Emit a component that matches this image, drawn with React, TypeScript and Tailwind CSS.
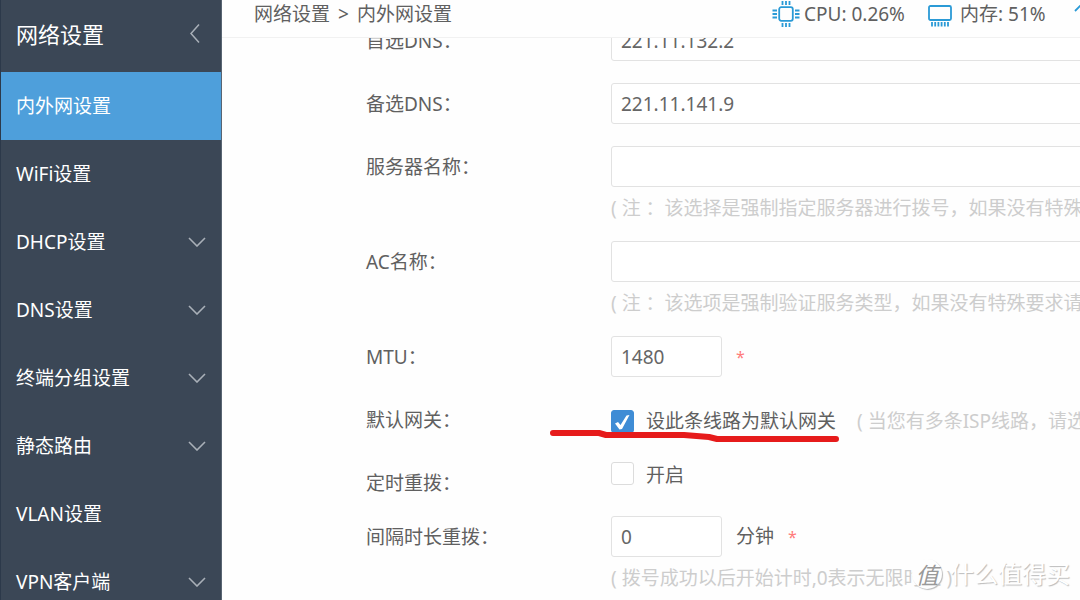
import React, { useState } from "react";
import { clsx } from "clsx";

const menuItems = [
  { name: "内外网设置" },
  { name: "WiFi设置" },
  { name: "DHCP设置", children: true },
  { name: "DNS设置", children: true },
  { name: "终端分组设置", children: true },
  { name: "静态路由", children: true },
  { name: "VLAN设置" },
  { name: "VPN客户端", children: true },
];

const ChevronDown = () => (
  <svg width="18" height="10" viewBox="0 0 18 10" fill="none" stroke="#a9b0b8" strokeWidth="1.6">
    <path d="M1 1l8 8 8-8" />
  </svg>
);

const ChevronLeft = () => (
  <svg width="10" height="19" viewBox="0 0 10 19" fill="none" stroke="#a9b0b8" strokeWidth="1.5">
    <path d="M9 0.5L1 9.5l8 9" />
  </svg>
);

const CpuIcon = () => (
  <svg width="28" height="28" viewBox="0 0 28 28" fill="none" stroke="#2a9ad6" strokeWidth="1.8">
    <rect x="7.2" y="7.2" width="13.6" height="13.6" rx="2" />
    <path d="M10.500 1v4M14 1v4M17.500 1v4M10.500 23v4M14 23v4M17.500 23v4M.5 10.500h4.500M.5 14h4.500M.5 17.500h4.500M23 10.500h4.500M23 14h4.500M23 17.500h4.500" />
  </svg>
);

const MemoryIcon = () => (
  <svg width="24" height="22" viewBox="0 0 24 22" fill="none" stroke="#2a9ad6" strokeWidth="1.8">
    <rect x="1" y="1" width="22" height="14" rx="1.500" />
    <path d="M4 17v4.500M7.200 17v4.500M10.400 17v4.500M13.600 17v4.500M16.800 17v4.500M20 17v4.500" />
  </svg>
);

const UploadIcon = () => (
  <svg width="20" height="24" viewBox="0 0 20 24" fill="none" stroke="#2a9ad6" strokeWidth="1.8">
    <path d="M1 11l9-9 9 9M10 3v20" />
  </svg>
);

const Row = ({ label, id, hint, short, children }: any) => (
  <div className="mb-[22px]">
    <div className={clsx("flex", short ? "h-8 items-start" : "h-[41px] items-center")}>
      <label htmlFor={id} className="w-[245px] shrink-0 leading-[42px]">
        {label}：
      </label>
      {children}
    </div>
    {hint && <p className="ml-[245px] pt-[10px] leading-[22px] text-[#cdcdcd]">{hint}</p>}
  </div>
);

const TextInput = ({ className = "flex-1", ...props }: any) => (
  <input
    type="text"
    className={clsx(
      "h-[41px] rounded-[3px] border border-[#e2e2e2] bg-white px-[9px] text-[#666] outline-none",
      className
    )}
    {...props}
  />
);

const CheckBox = ({ id, checked, onChange }: any) => (
  <span className="relative flex size-[23px] shrink-0">
    <input
      id={id}
      type="checkbox"
      checked={checked}
      onChange={onChange}
      className="size-[23px] appearance-none rounded-[3px] border border-[#dcdcdc] bg-white checked:border-[#3f8cd5] checked:bg-[#3f8cd5]"
    />
    {checked && (
      <svg className="pointer-events-none absolute inset-0" viewBox="0 0 23 23" fill="white">
        <path d="M4 13.500l3-1.500 2.500 3L15.500 5.500l3-.500L11 19l-2.500.500z" />
      </svg>
    )}
  </span>
);

const Required = () => <span className="ml-[14px] text-base text-[#ff7b7b]">*</span>;

const Sidebar = () => {
  const [active, setActive] = useState("内外网设置");

  return (
    <aside className="w-[222px] shrink-0 border-x border-l-[#2c394a] border-r-[#596573] bg-[#3b4756] text-white">
      <div className="flex h-[72px] items-start justify-between pr-[21px] pl-[15px]">
        <h1 className="text-[22px] leading-[68px]">网络设置</h1>
        <button type="button" aria-label="收起" className="mt-6">
          <ChevronLeft />
        </button>
      </div>
      <nav>
        {menuItems.map((item) => (
          <button
            key={item.name}
            type="button"
            onClick={() => setActive(item.name)}
            className={clsx(
              "flex h-[68px] w-full items-center justify-between pr-[15px] pl-[15px]",
              active === item.name && "bg-[#4e9fdb]"
            )}
          >
            {item.name}
            {item.children && <ChevronDown />}
          </button>
        ))}
      </nav>
    </aside>
  );
};

const TopBar = () => (
  <header className="z-10 flex h-[38px] shrink-0 items-start border-b border-[#f1f1f1] bg-[#fefefe] pl-8 leading-7 whitespace-nowrap">
    <div className="flex gap-2">
      <span>网络设置</span>
      <span>&gt;</span>
      <span>内外网设置</span>
    </div>
    <div className="-mr-[14px] ml-auto flex shrink-0">
      <div className="mr-5 flex gap-1">
        <CpuIcon />
        <span className="w-[104px]">CPU: 0.26%</span>
      </div>
      <div className="mr-[27px] flex gap-2">
        <span className="pt-[5px]">
          <MemoryIcon />
        </span>
        <span className="w-[87px]">内存: 51%</span>
      </div>
      <UploadIcon />
    </div>
  </header>
);

export default function App() {
  const [gateway, setGateway] = useState(true);
  const [redial, setRedial] = useState(false);

  return (
    <div className="relative flex h-screen overflow-hidden bg-[#fefefe] font-['Noto_Sans','Noto_Sans_CJK_SC',sans-serif] text-[19px] text-[#606060]">
      <Sidebar />
      <main className="flex min-w-0 flex-1 flex-col overflow-hidden">
        <TopBar />
        <div className="min-h-0 flex-1 overflow-hidden">
          {/* scrolled a little, the first row sits under the top bar */}
          <form className="-mt-[18px] ml-36 min-w-[840px] whitespace-nowrap">
            <Row label="首选DNS" id="dns1">
              <TextInput id="dns1" defaultValue="221.11.132.2" />
            </Row>
            <Row label="备选DNS" id="dns2">
              <TextInput id="dns2" defaultValue="221.11.141.9" />
            </Row>
            <Row
              label="服务器名称"
              id="server"
              hint="( 注 ：该选择是强制指定服务器进行拨号，如果没有特殊"
            >
              <TextInput id="server" />
            </Row>
            <Row
              label="AC名称"
              id="ac"
              hint="( 注 ：该选项是强制验证服务类型，如果没有特殊要求请"
            >
              <TextInput id="ac" />
            </Row>
            <Row label="MTU" id="mtu">
              <TextInput id="mtu" defaultValue="1480" className="w-[111px]" />
              <Required />
            </Row>
            <Row label="默认网关" id="gateway">
              <div className="relative flex items-center pt-1">
                <CheckBox id="gateway" checked={gateway} onChange={() => setGateway(!gateway)} />
                <label htmlFor="gateway" className="ml-3">
                  设此条线路为默认网关
                </label>
                {/* hand drawn underline */}
                <svg
                  className="pointer-events-none absolute top-[26px] -left-[62px]"
                  width="292"
                  height="16"
                  viewBox="0 0 292 16"
                  fill="none"
                  stroke="#e61b1b"
                  strokeWidth="6"
                  strokeLinecap="round"
                  strokeLinejoin="round"
                >
                  <path d="M4 4H50L57 6H135L160 8L168 10H287" />
                </svg>
              </div>
              <span className="ml-[21px] pt-1 text-[#cdcdcd]">( 当您有多条ISP线路，请选</span>
            </Row>
            <Row label="定时重拨" id="redial" short>
              <CheckBox id="redial" checked={redial} onChange={() => setRedial(!redial)} />
              <label htmlFor="redial" className="ml-3 leading-[26px]">
                开启
              </label>
            </Row>
            <Row
              label="间隔时长重拨"
              id="interval"
              hint="( 拨号成功以后开始计时,0表示无限时长 )"
            >
              <TextInput id="interval" defaultValue="0" className="w-[111px]" />
              <span className="ml-[14px]">分钟</span>
              <Required />
            </Row>
          </form>
        </div>
      </main>

      {/* Watermark */}
      <div className="pointer-events-none absolute right-[10px] bottom-1 flex items-center gap-2 text-[24px] leading-[44px] text-white [text-shadow:1px_1px_1px_#bbb]">
        <span className="flex size-[30px] items-center justify-center rounded-full bg-[#fefefe] font-['Noto_Sans_CJK_SC',sans-serif] text-[23px] text-[#999] italic shadow-[1px_1px_1px_#bbb] [text-shadow:none]">
          值
        </span>
        什么值得买
      </div>
    </div>
  );
}
